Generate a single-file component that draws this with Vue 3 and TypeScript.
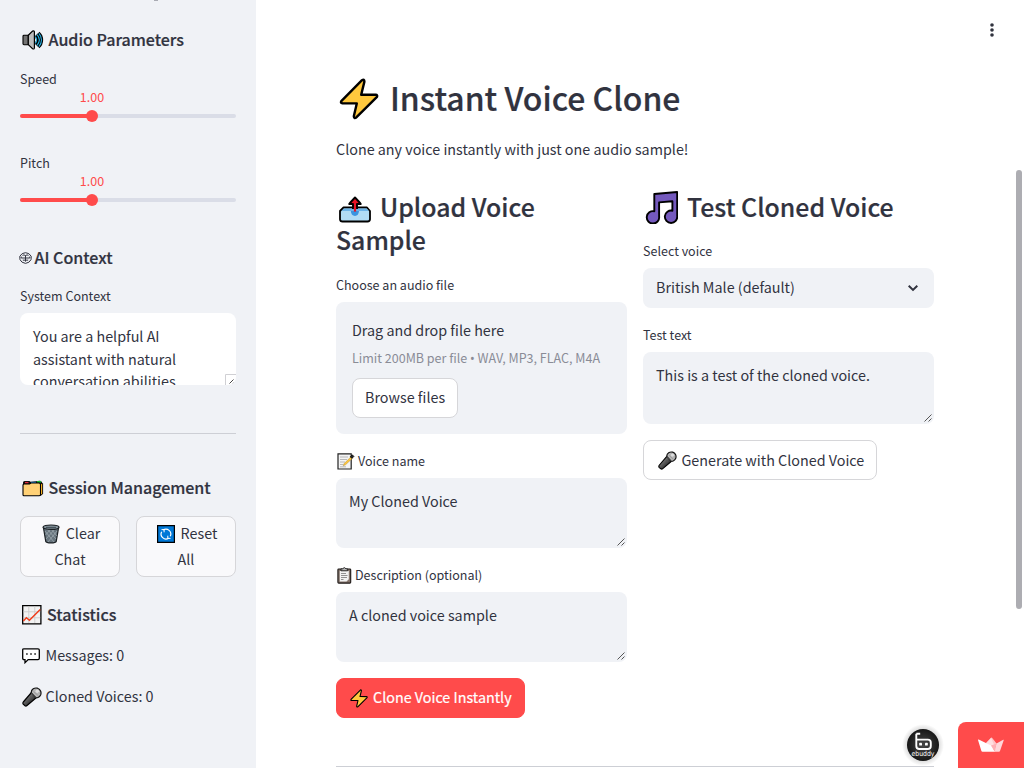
<script setup lang="ts">
import { ref } from 'vue'

interface Slider {
  label: string
  value: number
  min: number
  max: number
}

const sliders = ref<Slider[]>([
  { label: 'Speed', value: 1, min: 0.5, max: 2 },
  { label: 'Pitch', value: 1, min: 0.5, max: 2 },
])

const percent = (s: Slider): string => `${((s.value - s.min) / (s.max - s.min)) * 100}%`

const messages = ref(0)
const clonedVoices = ref(0)
</script>

<template>
  <div class="app">
    <svg class="defs" width="0" height="0" aria-hidden="true">
      <defs>
        <linearGradient id="micBody" x1="0" y1="0" x2="1" y2="1">
          <stop offset="0.2" stop-color="#8a8a8a" />
          <stop offset="0.7" stop-color="#303030" />
        </linearGradient>
        <symbol id="bolt" viewBox="0 0 40 42">
          <path d="M23 2.2 2.3 23.2Q1.2 25 3.4 25.2L17.8 25.4 14.8 38.2Q15 41 17.3 39.4L38 18.8Q38.8 17 36.7 16.8L22.2 16.7 25.4 3.6Q25.3.7 23 2.2Z" fill="#ffc83d" stroke="#000" stroke-width="2.4" stroke-linejoin="round" />
        </symbol>
        <symbol id="mic" viewBox="0 0 20 20">
          <path d="M9.5 5.5 1.3 15Q.5 16 1.2 17.2L3 18.8Q4 19.4 5 18.5L14.3 10.7Z" fill="url(#micBody)" stroke="#000" stroke-width="1.2" />
          <path d="M9.2 5.8C9.2 1.9 12.5.5 15.5 1.2 19 2.4 19.5 5.7 18.6 8 17.5 10.5 14.5 11.2 13.6 10.4Z" fill="#b5b5b5" stroke="#111" stroke-width="1.2" />
          <path d="m9.2 6.2 4.8 4.3M8 9.3l2.3 2" stroke="#555" stroke-width=".8" />
          <path d="M11.5 4.4l4.6 4.2M13.5 2.4l4 3.9" stroke="#888" stroke-width=".6" />
          <circle cx="15.3" cy="4.3" r="1.8" fill="#ddd" />
        </symbol>
      </defs>
    </svg>

    <aside class="sidebar">
      <i class="cut-glyph"></i>
      <h3 class="h3 audio">
        <svg width="22" height="20" viewBox="0 0 22 20">
          <path d="M1 6.2Q1 5.3 2 5.3H6.3V14.7H2Q1 14.7 1 13.8Z" fill="#737373" stroke="#000" stroke-width="1.1" />
          <path d="M6.3 5.3 10.6 1.1Q12.4.4 12.4 2V17.8Q12.3 19.6 10.6 18.7L6.3 14.6Z" fill="#bcbcbc" stroke="#000" stroke-width="1.2" />
          <path d="M13.2 6C16 8 16 12 13.2 14M15 4.2C18.3 7.2 18.3 12.8 15 15.8M16.6 2.8C21 6.5 21 13.5 16.6 17.2" fill="none" stroke="#000" stroke-width="2.5" />
          <path d="M13.2 6.6C15 8.5 15 11.5 13.2 13.4M15.1 4.7C17.9 8 17.9 12 15.1 15.3M16.9 3.4C20.3 7.2 20.3 12.8 16.9 16.6" fill="none" stroke="#26b5e8" stroke-width="1.1" />
        </svg>
        <span>Audio Parameters</span>
      </h3>

      <div v-for="s in sliders" :key="s.label" class="slider">
        <label class="label">{{ s.label }}</label>
        <div class="track">
          <div class="fill" :style="{ width: percent(s) }"></div>
          <div class="thumb" :style="{ left: percent(s) }">
            <span class="value">{{ s.value.toFixed(2) }}</span>
          </div>
        </div>
      </div>

      <h3 class="h3 context">
        <svg width="13" height="12" viewBox="0 0 13 12" fill="none" stroke="#31333f" stroke-width="1">
          <path d="M3.2 1.6Q6.5-.2 9.8 1.6 13.6 4 12 7.7 10.6 10.8 6.5 11.4 2.4 10.8 1 7.7-.6 4 3.2 1.6Z" />
          <path d="M3.4 3.3Q5 2.5 6.5 3.5 8 2.5 9.6 3.3M2.2 4.5V6H10.8V4.5M3.8 8Q5 8.7 6.5 7.8 8 8.7 9.2 8M6.5 3.5V9.6" />
        </svg>
        <span>AI Context</span>
      </h3>
      <label class="label sys">System Context</label>
      <div class="area white">
        You are a helpful AI<br />assistant with natural<br />conversation abilities.
        <svg class="corner" width="11" height="11" viewBox="0 0 11 11">
          <path d="M.5 11V.5H11" fill="none" stroke="#d0d0d4" />
          <path d="m4.5 9.5 4-4M8 9.5l1-1" stroke="#333" stroke-width=".9" />
        </svg>
      </div>
      <hr class="rule" />

      <h3 class="h3 session">
        <svg width="22" height="17" viewBox="0 0 22 17">
          <path d="M1 15V2.5Q1 1 2.5 1H7.5L8.5 1.8 16 1Q19 .3 20 2.3V15Z" fill="#111" />
          <path d="M3 2.7H6.5" stroke="#e32b3e" stroke-width="1.5" />
          <path d="M9 2.6H14" stroke="#2390e8" stroke-width="1.5" />
          <path d="M15 1.8H19" stroke="#16b834" stroke-width="1.6" />
          <path d="M18.3 4 20.6 3.3V14L18.3 15.6Z" fill="#ffb51e" stroke="#000" stroke-width=".9" />
          <path d="M1 5Q1 4 2 4H7.5L9 3H17Q18.5 3 18.5 4.7V14.6Q18.5 15.8 17.3 15.8H2Q1 15.8 1 14.8Z" fill="#ffd176" stroke="#000" stroke-width="1.1" />
        </svg>
        <span class="tight">Session Management</span>
      </h3>
      <div class="buttons">
        <button class="btn side">
          <span class="line">
            <svg width="18" height="20" viewBox="0 0 18 20">
              <path d="M1.5 4 3.8 17.5Q4.3 18.8 9 18.9 13.7 18.8 14.2 17.5L16.5 4Z" fill="#66737c" stroke="#1b2024" stroke-width="1.2" />
              <path d="m3 7 9 11M5 5l9 10M9 5l6 7M15 7 6 18M13 5 4 15M9 5 3.5 11" stroke="#a9b4ba" stroke-width=".65" />
              <ellipse cx="9" cy="3.2" rx="8" ry="2.2" fill="#83919a" stroke="#1b2024" stroke-width="1.2" />
              <path d="M4 3.5H14" stroke="#46535b" stroke-width="1.3" />
            </svg>
            <span>Clear</span>
          </span>
          <span class="line second"><span>Chat</span></span>
        </button>
        <button class="btn side">
          <span class="line">
            <svg width="18" height="18" viewBox="0 0 18 18">
              <path d="M.6.6H17.4V17.4H.6Z" fill="#0078d7" stroke="#000" stroke-width="1.2" />
              <path d="M6.2 5A4.9 4.9 0 0 1 13.3 11.2M11.6 13.2A4.9 4.9 0 0 1 4.7 6.7" fill="none" stroke="#fff" stroke-width="1.2" />
              <path d="M4.5 4.6H7.1V7.3M13.5 13.4H10.8V10.7" fill="none" stroke="#fff" stroke-width="1" />
            </svg>
            <span>Reset</span>
          </span>
          <span class="line second"><span>All</span></span>
        </button>
      </div>

      <h3 class="h3 stats">
        <svg width="20" height="20" viewBox="0 0 20 20">
          <path d="M.7.7H18.9V18.9H.7Z" fill="#f2f2f2" stroke="#000" stroke-width="1.3" />
          <path d="M6.8 1.4V18M12.8 1.4V18M1.4 6.8H18.2M1.4 12.8H18.2" stroke="#ccc" stroke-width=".9" />
          <path d="m1.4 16 3-3.2 3 2.4L18.2 4.5" fill="none" stroke="#f03a17" stroke-width="1.4" />
        </svg>
        <span>Statistics</span>
      </h3>
      <p class="stat msg">
        <svg width="18" height="16" viewBox="0 0 18 16">
          <path d="M2 .8H16Q17.3.8 17.3 2V10.3Q17.3 11.6 16 11.6H6.2L3 14.7V11.6H2Q.7 11.6.7 10.3V2Q.7.8 2 .8Z" fill="#fff" stroke="#000" stroke-width="1.3" />
          <path d="M4 6H5.8M8.1 6H9.9M12.2 6H14" stroke="#333" stroke-width="1.5" />
        </svg>
        <span>Messages: {{ messages }}</span>
      </p>
      <p class="stat voices">
        <svg width="20" height="20"><use href="#mic" /></svg>
        <span>Cloned Voices: {{ clonedVoices }}</span>
      </p>
    </aside>

    <main class="main">
      <svg class="menu" width="6" height="16" viewBox="0 0 6 16" fill="#31333f">
        <circle cx="3" cy="3" r="1.8" /><circle cx="3" cy="8" r="1.8" /><circle cx="3" cy="13" r="1.8" />
      </svg>

      <h1 class="h1">
        <svg width="40" height="42"><use href="#bolt" /></svg>
        <span>Instant Voice Clone</span>
      </h1>
      <p class="lead">Clone any voice instantly with just one audio sample!</p>

      <div class="columns">
        <section class="col">
          <h2 class="h2">
            <span class="line">
              <svg class="tray" width="34" height="28" viewBox="0 0 34 28">
                <path d="M5.5 12.5H29L32 16V24.3Q32 26.5 29.5 26.5H4.5Q2 26.5 2 24.3V16Z" fill="#b1dcf5" stroke="#000" stroke-width="1.8" stroke-linejoin="round" />
                <path d="M5.8 13.4H28.5L30.6 16H3.5Z" fill="#6db4e8" />
                <path d="M12.8 16H21Q20.5 20.8 17 21 13.3 20.8 12.8 16Z" fill="#3b94e0" />
                <path d="M15 14V9H11.2Q12 7.8 17 2.5 22 7.8 22.8 9H19V14" fill="#e81224" stroke="#000" stroke-width="1.9" stroke-linejoin="round" />
                <path d="M15.9 12H18.1V16.6H15.9Z" fill="#e81224" />
              </svg>
              <span>Upload Voice</span>
            </span>
            <span class="line sample"><span>Sample</span></span>
          </h2>
          <label class="label choose">Choose an audio file</label>
          <div class="dropzone">
            <div class="drop-title">Drag and drop file here</div>
            <div class="drop-note">Limit 200MB per file <span class="dot">•</span> WAV, MP3, FLAC, M4A</div>
            <button class="btn browse"><span>Browse files</span></button>
          </div>

          <label class="label voice-name">
            <svg width="18" height="17" viewBox="0 0 18 17">
              <path d="M1 .8H14.2V16H1Z" fill="#f4f4f4" stroke="#222" stroke-width="1.2" />
              <path d="M3 4H11M3 6.5H10M3 9H8M3 11.5H6.5M3 13.8H9" stroke="#aaa" stroke-width=".8" />
              <path d="M7.2 10.5 14 3.7 15.5 5.2 8.5 11.8 6.2 12.8Z" fill="#ffc83d" stroke="#a07724" stroke-width=".4" />
              <path d="m13.3 3.8 2-2 1.6 1.6-2 2Z" fill="#222" stroke="#000" stroke-width=".8" />
            </svg>
            <b class="plain">Voice name</b>
          </label>
          <div class="area small">
            My Cloned Voice
            <svg class="grip" width="8" height="8" viewBox="0 0 8 8"><path d="M.5 7.5l7-7M4.5 7.5l3-3" stroke="#444" stroke-width=".9" /></svg>
          </div>

          <label class="label description">
            <svg width="15" height="17" viewBox="0 0 15 17">
              <rect x=".9" y="2" width="12.8" height="14.1" rx=".8" fill="#85756c" stroke="#1c1715" stroke-width="1.1" />
              <path d="M2.8 4H11.8V12.2L9.5 14.5H2.8Z" fill="#f2f2f2" />
              <path d="M4 6.5H9M4 8.5H10.5M4 10.5H10M4 12.5H6.5" stroke="#777" stroke-width=".8" />
              <path d="M4 3.8V1.8H5.6Q7.3-.6 9 1.8H10.6V3.8Z" fill="#b3b3b3" stroke="#222" stroke-width=".9" />
            </svg>
            <b class="plain">Description (optional)</b>
          </label>
          <div class="area small">
            A cloned voice sample
            <svg class="grip" width="8" height="8" viewBox="0 0 8 8"><path d="M.5 7.5l7-7M4.5 7.5l3-3" stroke="#444" stroke-width=".9" /></svg>
          </div>
          <button class="btn primary">
            <svg width="18" height="19"><use href="#bolt" /></svg>
            <span>Clone Voice Instantly</span>
          </button>
        </section>

        <section class="col">
          <h2 class="h2">
            <span class="line test">
              <svg width="33" height="33" viewBox="0 0 33 33">
                <path d="M9.3 3 32.2 1V25A6.2 6.2 0 1 1 27.4 19.7V10.3L14.1 11.4V25.5A6.2 6.2 0 1 1 9.3 20.3Z" fill="#7459bd" stroke="#000" stroke-width="1.9" stroke-linejoin="round" />
              </svg>
              <span>Test Cloned Voice</span>
            </span>
          </h2>
          <label class="label select-label">Select voice</label>
          <div class="select">
            <span>British Male (default)</span>
            <svg width="12" height="8" viewBox="0 0 12 8"><path d="m1.7 1.7 4.3 4.2 4.3-4.2" fill="none" stroke="#31333f" stroke-width="2" /></svg>
          </div>
          <label class="label test-label">Test text</label>
          <div class="area test-area">
            This is a test of the cloned voice.
            <svg class="grip" width="8" height="8" viewBox="0 0 8 8"><path d="M.5 7.5l7-7M4.5 7.5l3-3" stroke="#444" stroke-width=".9" /></svg>
          </div>
          <button class="btn generate">
            <svg width="19" height="19"><use href="#mic" /></svg>
            <b class="plain">Generate with Cloned Voice</b>
          </button>
        </section>
      </div>
      <hr class="rule bottom" />
      <div class="scrollbar"></div>
    </main>

    <svg class="avatar" width="44" height="44" viewBox="0 0 44 44">
      <defs>
        <radialGradient id="halo"><stop offset=".7" stop-color="#000" stop-opacity=".16" /><stop offset="1" stop-color="#000" stop-opacity="0" /></radialGradient>
        <radialGradient id="disc"><stop offset="0" stop-color="#484848" /><stop offset="1" stop-color="#171717" /></radialGradient>
      </defs>
      <circle cx="22" cy="22" r="21" fill="url(#halo)" />
      <circle cx="22" cy="22" r="16" fill="url(#disc)" />
      <path d="M15.3 10.8V23Q15.3 26 18.3 26H26.8Q29.8 26 29.8 23V19.7Q29.8 16.6 26.8 16.6H15.8M15.3 10.8H19.2" fill="none" stroke="#fff" stroke-width="1.9" stroke-linejoin="round" />
      <rect x="18.2" y="19.8" width="2.8" height="2.8" rx=".7" fill="#fff" /><rect x="24" y="19.8" width="2.8" height="2.8" rx=".7" fill="#fff" />
      <text x="10.5" y="33" textLength="23" lengthAdjust="spacingAndGlyphs">ebuddy</text>
    </svg>
    <div class="crown">
      <svg width="28" height="16" viewBox="0 0 28 16">
        <path d="M9 6 14 .8Q14.5.3 15 .8L20 7 14 13Z" fill="#ffc5c8" />
        <path d="m9.3 6 4.8-5.1L19 12 9 14Z" fill="#ffdfe0" />
        <path d="M1 2.9Q.9 2.2 1.7 2.6L14 8.6 18 14.7H5.5Q4.7 14.7 4.4 14Z" fill="#fff" />
        <path d="M26.2 2.8Q27 2.5 26.7 3.3L23 14Q22.7 14.7 22 14.7H17L19.5 6.5Z" fill="#ffd7d9" />
        <path d="m14 8.5 5.5-2L17.8 14.7Z" fill="#ffb0b4" />
      </svg>
    </div>
  </div>
</template>

<style>
html, body { margin: 0; overflow: hidden; }
</style>

<style scoped>
.app {
  position: relative;
  display: flex;
  width: 1024px;
  height: 768px;
  overflow: hidden;
  background: #fff;
  color: #31333f;
  font-family: "Noto Sans CJK SC", "Noto Sans", sans-serif;
  font-size: 14.33px;
}
*, *::before, *::after { box-sizing: border-box; }
svg { flex: none; display: block; }
.defs { position: absolute; }
h1, h2, h3, p, hr { margin: 0; border: 0; }
h1, h2, h3 { font-weight: 500; white-space: nowrap; -webkit-text-stroke: 0.2px #31333f; }
.plain { font-weight: 400; }
.h1 > span, .h3 > span, .stat > span, .btn > span:not(.line), .line > span, .select > span { padding-bottom: 2px; }
.sidebar { position: relative; width: 256px; height: 768px; padding: 28px 20px 0; background: #f0f2f6; }
.cut-glyph { position: absolute; left: 154px; top: 0; width: 4px; height: 1px; background: #a9abb3; }
.h3 { display: flex; align-items: center; height: 24px; line-height: 24px; font-size: 16.05px; }
.audio { padding-left: 2px; gap: 4.5px; }
.label { display: flex; align-items: center; height: 20px; line-height: 20px; font-size: 12.53px; white-space: nowrap; }
.slider { height: 84px; padding-top: 17px; }
.track { position: relative; height: 4px; margin-top: 25px; border-radius: 4px; background: #dadde7; }
.fill { height: 4px; border-radius: 4px; background: #ff4b4b; }
.thumb { position: absolute; top: -4px; width: 12px; height: 12px; margin-left: -6px; border-radius: 50%; background: #ff4b4b; }
.value { position: absolute; bottom: 15px; left: 50%; transform: translateX(-50%); line-height: 20px; font-size: 12.5px; color: #ff4b4b; }
.context { margin-top: 26px; gap: 2.5px; }
.context svg { margin-left: -1px; }
.sys { margin-top: 16px; }
.area { position: relative; overflow: hidden; padding: 11.5px 13px; border-radius: 8px; background: #f0f2f6; line-height: 22.4px; white-space: nowrap; }
.area.white { height: 72px; margin-top: 7px; padding-top: 11.8px; background: #fff; line-height: 22.8px; }
.corner { position: absolute; right: 0; bottom: 0; }
.grip { position: absolute; right: 2px; bottom: 2px; }
.rule { height: 1px; margin-top: 48px; background: #cdcfd5; }
.session { margin-top: 42px; padding-left: 2px; gap: 4.5px; }
.tight { letter-spacing: -0.03px; }
.buttons { display: flex; gap: 16px; margin-top: 16px; }
.btn { display: flex; align-items: center; height: 40px; margin: 0; padding: 0 12px; border: 1px solid #d6d6d9; border-radius: 8px; background: #fff; color: inherit; font: inherit; line-height: 25.6px; white-space: nowrap; }
.side { flex: 1; flex-direction: column; height: 61px; padding: 4px 0; background: #f9f9fb; }
.line { display: flex; align-items: center; justify-content: center; gap: 6px; height: 26px; }
.side .line { padding-left: 2px; }
.side .second { padding-left: 0; }
.stats { margin-top: 26px; padding-left: 2px; gap: 5px; }
.stat { display: flex; align-items: center; height: 24px; line-height: 24px; }
.msg { margin-top: 17px; padding-left: 2px; gap: 5.5px; }
.voices { margin-top: 17px; padding-left: 2px; gap: 3.5px; }
.main { position: relative; width: 768px; height: 768px; padding: 77px 90px 0 80px; }
.menu { position: absolute; right: 29px; top: 22px; }
.h1 { display: flex; align-items: center; height: 44px; padding-left: 3px; gap: 11px; font-size: 31.95px; line-height: 42px; }
.h1 > span { padding-bottom: 4px; }
.lead { margin-top: 16px; line-height: 24px; white-space: nowrap; }
.columns { display: grid; grid-template-columns: 291px 291px; gap: 16px; margin-top: 30px; }
.h2 { font-size: 24.85px; line-height: 33px; }
.h2 .line { height: 33px; justify-content: flex-start; gap: 8px; padding-left: 2px; }
.h2 .sample { padding-left: 0; }
.h2 .test { gap: 9px; }
.tray { margin-top: 3px; }
.choose { margin-top: 18px; }
.dropzone { height: 132px; margin-top: 7px; padding: 16px; border-radius: 8px; background: #f0f2f6; }
.drop-title { height: 24px; line-height: 24px; }
.drop-note { height: 20px; margin-top: 6px; line-height: 20px; font-size: 12.53px; color: #8a8c96; white-space: nowrap; }
.dot { font-family: "Noto Sans", sans-serif; }
.browse { margin-top: 10px; }
.voice-name { margin-top: 17px; gap: 3px; padding-left: 1px; }
.description { margin-top: 17px; gap: 3px; padding-left: 1px; }
.small { height: 70px; margin-top: 7px; }
.primary { width: 189px; height: 40px; margin-top: 16px; padding: 0 13px; gap: 5px; border-color: #ff4b4b; background: #ff4b4b; color: #fff; -webkit-text-stroke: 0.2px #fff; }
.select-label { margin-top: 17px; }
.select { display: flex; align-items: center; justify-content: space-between; height: 40px; margin-top: 7px; padding: 0 15px 0 13px; border-radius: 8px; background: #f0f2f6; }
.select > span { padding-bottom: 3px; }
.test-label { margin-top: 17px; }
.test-area { height: 72px; margin-top: 7px; }
.generate { width: 234px; margin-top: 16px; padding-left: 14px; gap: 4.5px; }
.bottom { margin-top: 48px; }
.scrollbar { position: absolute; right: 2px; top: 170px; width: 6px; height: 439px; border-radius: 3px; background: #adadb2; }
.avatar { position: absolute; left: 901px; top: 723px; }
.avatar text { font: 7px "DejaVu Sans", sans-serif; fill: #fff; }
.crown { position: absolute; right: 0; bottom: 0; display: flex; width: 66px; height: 46px; padding: 15px 0 0 19px; border-top-left-radius: 8px; background: #ff4b4b; }
</style>
